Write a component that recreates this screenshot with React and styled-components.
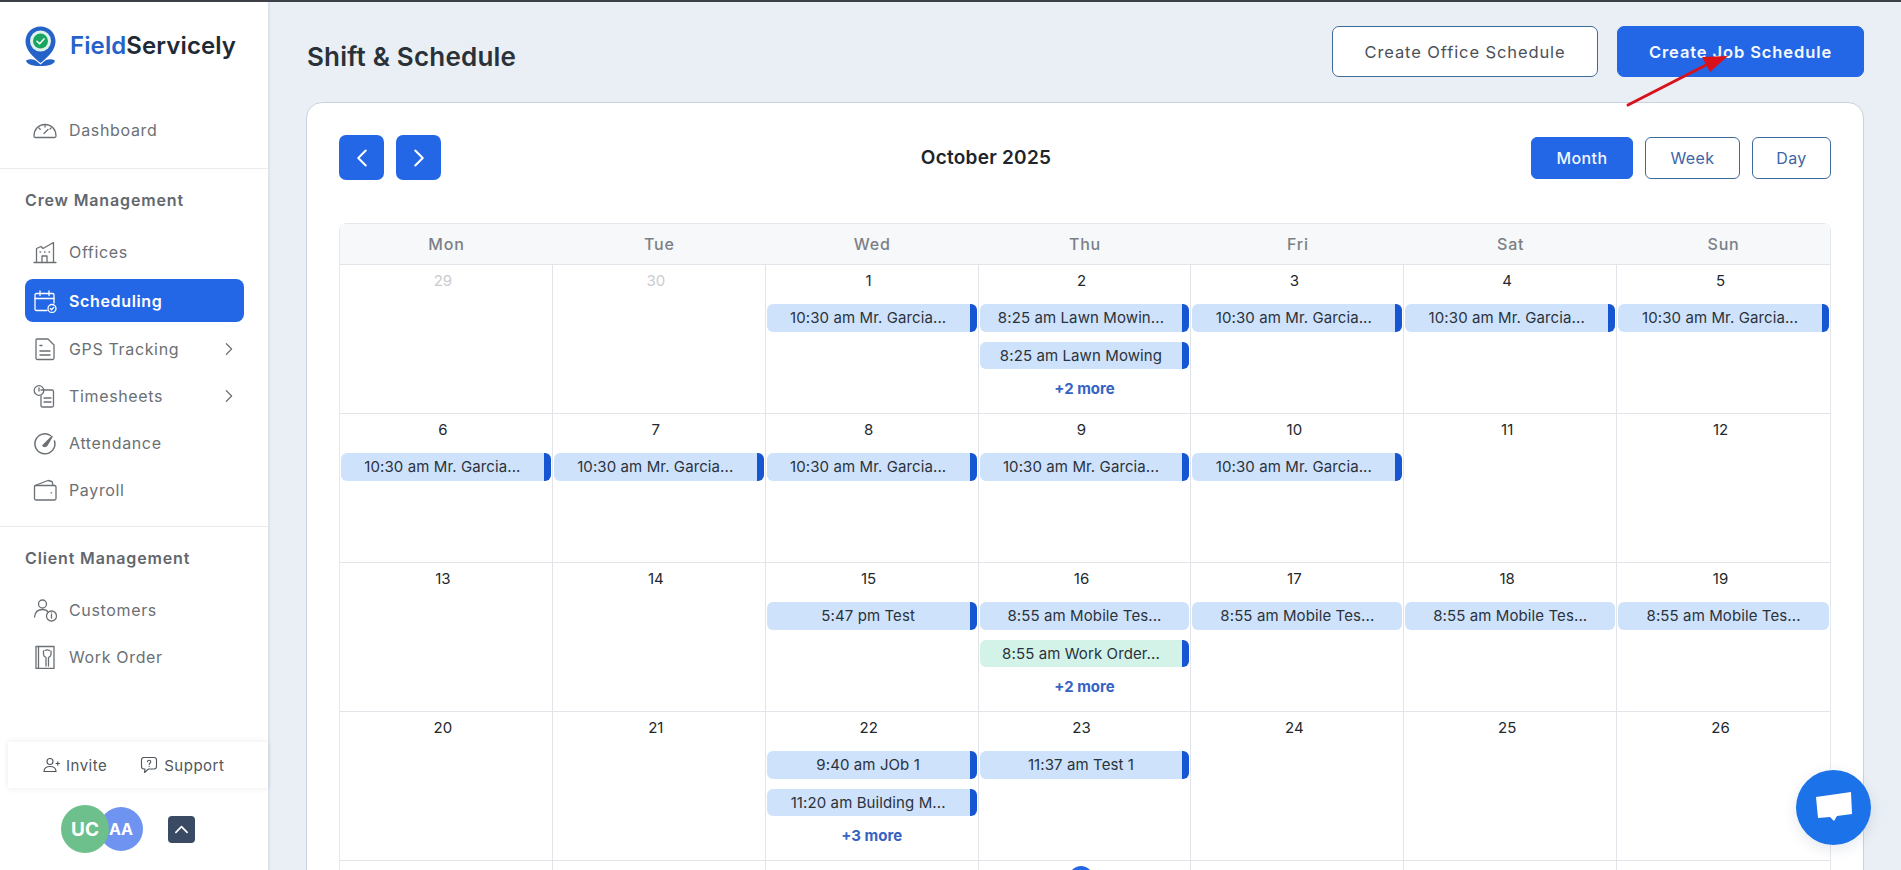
import React from 'react'
import styled, { createGlobalStyle } from 'styled-components'

const GlobalStyle = createGlobalStyle`
  * { box-sizing: border-box; }
  html, body { margin: 0; height: 870px; overflow: hidden; }
  body { font-family: Inter, "Open Sans", sans-serif; background: #e9eff5; }
`

const TopLine = styled.div`
  height: 2px;
  background: #3d4146;
`
const Layout = styled.div`
  display: flex;
  height: 868px;
`
const Sidebar = styled.aside`
  width: 270px;
  flex-shrink: 0;
  background: #fff;
  border-right: 2px solid #dde3eb;
  display: flex;
  flex-direction: column;
`
const Brand = styled.div`
  display: flex;
  gap: 14px;
  padding: 24px 0 0 25px;
  height: 106px;
  align-items: flex-start;
`
const BrandName = styled.div`
  font-size: 24px;
  font-weight: 600;
  color: #1f2a37;
  margin-top: 5px;
  letter-spacing: 0.1px;
  span { color: #2563c9; }
`
const NavRow = styled.div`
  height: 43px;
  margin: ${p => p.$active ? '6px 24px 1px 25px' : p.$first ? '0 24px 0 25px' : '4px 24px 0 25px'};
  padding: 0 8px;
  border-radius: 8px;
  display: flex;
  align-items: center;
  gap: 12px;
  font-size: 16px;
  letter-spacing: 0.65px;
  color: ${p => p.$active ? '#fff' : '#6b7075'};
  font-weight: ${p => p.$active ? 600 : 400};
  background: ${p => p.$active ? '#2367e6' : 'transparent'};
  svg.chev { margin-left: auto; }
`
const Divider = styled.div`
  height: 1px;
  background: #e9ecef;
  margin-top: ${p => p.$top || 0}px;
`
const SectionTitle = styled.div`
  font-size: 16px;
  font-weight: 600;
  letter-spacing: 0.85px;
  color: #62676d;
  padding-left: 25px;
  line-height: 20px;
  margin: 21px 0 20px;
`
const SideBottom = styled.div`
  margin-top: auto;
`
const InviteRow = styled.div`
  height: 46px;
  margin-left: 8px;
  display: flex;
  align-items: center;
  padding-left: 35px;
  gap: 33px;
  box-shadow: 0 -2px 6px rgba(30, 50, 80, 0.05), 0 2px 6px rgba(30, 50, 80, 0.05);
`
const InviteLink = styled.div`
  display: flex;
  align-items: center;
  gap: 6px;
  font-size: 15px;
  letter-spacing: 0.5px;
  color: #50565c;
`
const UserRow = styled.div`
  height: 82px;
  display: flex;
  align-items: center;
  padding: 0 0 0 61px;
`
const Avatar = styled.div`
  position: relative;
  z-index: ${p => p.$front ? 1 : 0};
  width: ${p => p.$size}px;
  height: ${p => p.$size}px;
  margin-left: ${p => p.$front ? 0 : -10}px;
  border-radius: 50%;
  background: ${p => p.$color};
  color: #fff;
  font-weight: 700;
  font-size: ${p => p.$front ? 19 : 16}px;
  display: flex;
  align-items: center;
  justify-content: center;
`
const UpButton = styled.div`
  width: 27px;
  height: 27px;
  margin-left: 25px;
  border-radius: 4px;
  background: #3a4a63;
  display: flex;
  align-items: center;
  justify-content: center;
`

const Main = styled.main`
  flex: 1;
  min-width: 0;
  height: 868px;
  overflow: hidden;
  padding: 24px 37px 0 36px;
`
const TopBar = styled.div`
  display: flex;
  align-items: center;
  gap: 19px;
  height: 51px;
  margin-bottom: 25px;
`
const PageTitle = styled.h1`
  margin: 9px auto 0 1px;
  font-size: 26px;
  font-weight: 600;
  color: #2b3138;
  letter-spacing: 0.2px;
`
const ActionButton = styled.div`
  height: 51px;
  width: ${p => p.$width}px;
  padding-top: 1px;
  border-radius: 7px;
  display: flex;
  align-items: center;
  justify-content: center;
  font-size: 16.5px;
  letter-spacing: 0.9px;
  font-weight: ${p => p.$primary ? 600 : 400};
  color: ${p => p.$primary ? '#f4f8ff' : '#4b5158'};
  background: ${p => p.$primary ? '#2367e6' : '#fff'};
  border: 1px solid ${p => p.$primary ? '#2367e6' : '#3f6b9b'};
`
const Card = styled.section`
  background: #fff;
  border: 1px solid #c9d2dd;
  border-radius: 16px;
  padding: 32px 32px 0;
`
const CalHeader = styled.div`
  display: flex;
  align-items: center;
  justify-content: space-between;
  height: 45px;
  margin-bottom: 43px;
`
const NavGroup = styled.div`
  display: flex;
  gap: ${p => p.$gap}px;
  align-items: center;
`
const ArrowButton = styled.div`
  width: 45px;
  height: 45px;
  border-radius: 7px;
  background: #2367e6;
  display: flex;
  align-items: center;
  justify-content: center;
`
const MonthTitle = styled.div`
  font-size: 19px;
  font-weight: 600;
  color: #20252b;
  letter-spacing: 0.25px;
`
const ViewButton = styled.div`
  height: 42px;
  width: ${p => p.$width}px;
  border-radius: 6px;
  display: flex;
  align-items: center;
  justify-content: center;
  font-size: 16px;
  letter-spacing: 0.4px;
  font-weight: ${p => p.$active ? 500 : 400};
  color: ${p => p.$active ? '#f1f6ff' : '#3e64a8'};
  background: ${p => p.$active ? '#2367e6' : '#fff'};
  border: 1px solid ${p => p.$active ? '#2367e6' : '#3f6b9b'};
`
const Grid = styled.div`
  display: grid;
  grid-template-columns: repeat(7, 1fr);
  border: 1px solid #e4e7eb;
  border-bottom: none;
  border-radius: 8px 8px 0 0;
`
const DayHead = styled.div`
  height: 41px;
  background: #f6f8f9;
  border-bottom: 1px solid #e1e4e8;
  display: flex;
  align-items: center;
  justify-content: center;
  font-size: 16px;
  font-weight: 500;
  letter-spacing: 0.8px;
  color: #7b8086;
`
const Cell = styled.div`
  height: 149px;
  padding: 5px 1px 0;
  border-right: 1px solid #e1e4e8;
  border-bottom: 1px solid #e1e4e8;
  &:nth-child(7n) { border-right: none; }
`
const DateNum = styled.div`
  height: 22px;
  line-height: 22px;
  margin-bottom: 12px;
  padding-right: 6px;
  text-align: center;
  font-size: 15px;
  color: ${p => p.$muted ? '#c9cccf' : '#23282d'};
`
const TodayMark = styled.span`
  display: inline-block;
  width: 24px;
  height: 24px;
  border-radius: 50%;
  background: #2367e6;
`
const Event = styled.div`
  height: 27.5px;
  margin-bottom: 10px;
  border-radius: 6px;
  overflow: hidden;
  display: flex;
  align-items: center;
  justify-content: center;
  white-space: nowrap;
  font-size: 15px;
  letter-spacing: 0.1px;
  color: #2a323c;
  background: ${p => p.$green ? '#d3f3e8' : '#cfe2fb'};
  border-right: ${p => p.$noBar ? 'none' : '7px solid #1656d2'};
`
const More = styled.div`
  margin-top: 1px;
  text-align: center;
  font-size: 15px;
  font-weight: 700;
  line-height: 20px;
  color: #3563c4;
`
const ChatBubble = styled.div`
  position: fixed;
  left: 1796px;
  top: 770px;
  width: 75px;
  height: 75px;
  border-radius: 50%;
  background: #1c72e8;
  box-shadow: 0 4px 14px rgba(30, 60, 110, 0.12);
  display: flex;
  align-items: center;
  justify-content: center;
`
const Annotation = styled.svg`
  position: fixed;
  left: 1620px;
  top: 48px;
  pointer-events: none;
`

const stroke = { fill: 'none', stroke: 'currentColor', strokeWidth: 1.3, strokeLinecap: 'round', strokeLinejoin: 'round' }

function Logo() {
  return (
    <svg width="31" height="41" viewBox="0 0 31 41">
      <path d="M1 34.5C5 32.5 9 33 12 35.5L15.5 38.5 19 35.5C22 33 26 32.5 30 34.5 29 38.5 24 40 15.5 40 7 40 2 38.5 1 34.5Z" fill="#2563c9" />
      <path d="M15.5 0.5C7 0.5 0.5 7 0.5 15.5 0.5 24 8 31 15.5 37 23 31 30.5 24 30.5 15.5 30.5 7 24 0.5 15.5 0.5Z" fill="#2563c9" />
      <circle cx="15.5" cy="15" r="10.5" fill="#dff3ea" />
      <circle cx="15.5" cy="15" r="7.5" fill="#19a561" />
      <path d="M12 15.2l2.6 2.5 4.4-4.8" fill="none" stroke="#fff" strokeWidth="1.5" strokeLinecap="round" strokeLinejoin="round" />
    </svg>
  )
}

const icons = {
  dashboard: (
    <g {...stroke}>
      <path d="M2.5 19.5C1.5 19.5 1 19 1 18 1 11.5 5.5 6.5 12 6.5S23 11.5 23 18C23 19 22.5 19.5 21.5 19.5Z" />
      <path d="M11 15.5l4-4M6 10l1.2 1.2M12 7.500v1.500M18 10l-1 1" />
    </g>
  ),
  offices: (
    <g {...stroke}>
      <path d="M1 22.500H23M3.500 22.500V8.500L8 6.500 10 8.500 20.500 2.500V22.500" />
      <path d="M9 22.500V16H14V22.500M7 12h.6M11.500 12h.6M16 12h.6" />
    </g>
  ),
  scheduling: (
    <g {...stroke}>
      <path d="M14 21.500H3.500C2.500 21.500 2 21 2 20V6C2 5 2.500 4.500 3.500 4.500H19.500C20.500 4.500 21 5 21 6V14" />
      <path d="M2 9.500H21M7 2V6.500M16 2V6.500" />
      <circle cx="19" cy="19.500" r="4" />
      <path d="M17.300 19.600l1.300 1.200 2.200-2.400" />
    </g>
  ),
  gps: (
    <g {...stroke}>
      <path d="M4 2H15L21 8V21C21 22 20.500 22.500 19.500 22.500H4.500C3.500 22.500 3 22 3 21V3C3 2.500 3.500 2 4 2Z" />
      <path d="M7 8.500H9M7 14H17M7 18H17" strokeWidth="1.4" />
    </g>
  ),
  timesheets: (
    <g {...stroke}>
      <path d="M8 6H19C20 6 20.500 6.500 20.500 7.500V21.500C20.500 22.500 20 23 19 23H9.500C8.500 23 8 22.500 8 21.500V12" />
      <circle cx="6" cy="6.500" r="4.800" />
      <path d="M6 4V7M11 14H18M11 18H18" />
    </g>
  ),
  attendance: (
    <g {...stroke} strokeWidth="1.5">
      <path d="M17.500 4.500A10 10 0 1 0 21.500 10" />
      <path d="M10 14.500L19 5.500 14 14C13 15.500 10.500 16 10 14.500Z" fill="currentColor" />
    </g>
  ),
  payroll: (
    <g {...stroke}>
      <path d="M1.500 8.500V20.500C1.500 21.500 2 22 3 22H21.500C22.500 22 23 21.500 23 20.500V9C23 8 22.500 7.500 21.500 7.500H3C2 7.500 1.500 8 1.500 8.500Z" />
      <path d="M2 7.500L15 2.500 19 3.500 20 7M18 14.800h.6" />
    </g>
  ),
  customers: (
    <g {...stroke}>
      <circle cx="9.500" cy="6" r="4" />
      <path d="M1.500 19C2 14 5 11.500 9.500 11.500 12 11.500 14 12.500 15 14" />
      <circle cx="18.500" cy="18" r="5" />
      <path d="M18.500 16.500V20M18.500 14.800v.1" />
    </g>
  ),
  workorder: (
    <g {...stroke}>
      <path d="M3 1.500H21V23.500H3ZM5.500 1.500V23.500" />
      <path d="M10.500 6V9.500C10.500 11 12 12 13 12.500V21M18 6V9.500C18 11 16.500 12 15.500 12.500V21M12 5.500A5 5 0 0 1 16.500 5.500" />
    </g>
  ),
}

function NavIcon({ name }) {
  return <svg width="24" height="24" viewBox="0 0 24 24">{icons[name]}</svg>
}

function Chevron({ dir = 'right', color = '#6b7075', size = 14, width = 1.4 }) {
  const d = dir === 'right' ? 'M5 2l6 6-6 6' : dir === 'left' ? 'M11 2L5 8l6 6' : 'M2 11l6-6 6 6'
  return (
    <svg className="chev" width={size} height={size} viewBox="0 0 16 16">
      <path d={d} fill="none" stroke={color} strokeWidth={width} strokeLinecap="round" strokeLinejoin="round" />
    </svg>
  )
}

const g = t => ({ t })
const garcia = g('10:30 am Mr. Garcia...')
const mobile = { t: '8:55 am Mobile Tes...', noBar: true }

const weeks = [
  [
    { d: 29, muted: true }, { d: 30, muted: true },
    { d: 1, ev: [garcia] },
    { d: 2, ev: [g('8:25 am Lawn Mowin...'), g('8:25 am Lawn Mowing')], more: 2 },
    { d: 3, ev: [garcia] }, { d: 4, ev: [garcia] }, { d: 5, ev: [garcia] },
  ],
  [
    { d: 6, ev: [garcia] }, { d: 7, ev: [garcia] }, { d: 8, ev: [garcia] },
    { d: 9, ev: [garcia] }, { d: 10, ev: [garcia] }, { d: 11 }, { d: 12 },
  ],
  [
    { d: 13 }, { d: 14 },
    { d: 15, ev: [g('5:47 pm Test')] },
    { d: 16, ev: [mobile, { t: '8:55 am Work Order...', green: true }], more: 2 },
    { d: 17, ev: [mobile] }, { d: 18, ev: [mobile] }, { d: 19, ev: [mobile] },
  ],
  [
    { d: 20 }, { d: 21 },
    { d: 22, ev: [g('9:40 am JOb 1'), g('11:20 am Building M...')], more: 3 },
    { d: 23, ev: [g('11:37 am Test 1')] },
    { d: 24 }, { d: 25 }, { d: 26 },
  ],
  // only the top of the next week shows above the fold: the today marker
  [{}, {}, {}, { today: true }, {}, {}, {}],
]

const days = ['Mon', 'Tue', 'Wed', 'Thu', 'Fri', 'Sat', 'Sun']

export default function App() {
  return (
    <>
      <GlobalStyle />
      <TopLine />
      <Layout>
        <Sidebar>
          <Brand>
            <Logo />
            <BrandName><span>Field</span>Servicely</BrandName>
          </Brand>
          <NavRow $first><NavIcon name="dashboard" />Dashboard</NavRow>
          <Divider $top={17} />
          <SectionTitle>Crew Management</SectionTitle>
          <NavRow $first><NavIcon name="offices" />Offices</NavRow>
          <NavRow $active><NavIcon name="scheduling" />Scheduling</NavRow>
          <NavRow><NavIcon name="gps" />GPS Tracking<Chevron /></NavRow>
          <NavRow><NavIcon name="timesheets" />Timesheets<Chevron /></NavRow>
          <NavRow><NavIcon name="attendance" />Attendance</NavRow>
          <NavRow><NavIcon name="payroll" />Payroll</NavRow>
          <Divider $top={15} />
          <SectionTitle>Client Management</SectionTitle>
          <NavRow $first><NavIcon name="customers" />Customers</NavRow>
          <NavRow><NavIcon name="workorder" />Work Order</NavRow>
          <SideBottom>
            <InviteRow>
              <InviteLink>
                <svg width="17" height="16" viewBox="0 0 17 16">
                  <g fill="none" stroke="#50565c" strokeWidth="1.1" strokeLinecap="round">
                    <circle cx="7" cy="4.500" r="3" />
                    <path d="M1 14.500C1 11 3.500 9.500 7 9.500S13 11 13 14.500ZM13 6.500h3.500M14.750 4.750v3.500" />
                  </g>
                </svg>
                Invite
              </InviteLink>
              <InviteLink>
                <svg width="18" height="18" viewBox="0 0 18 18">
                  <path d="M4 1.500H14C15.500 1.500 16.500 2.500 16.500 4V10.500C16.500 12 15.500 13 14 13H8.500L4.500 16.500 5 13H4C2.500 13 1.500 12 1.500 10.500V4C1.500 2.500 2.500 1.500 4 1.500Z" fill="none" stroke="#50565c" strokeWidth="1.1" strokeLinejoin="round" />
                  <path d="M7.500 5.800C7.500 3.800 10.800 3.800 10.800 5.800 10.800 7 9.200 7 9.200 8.500M9.200 10.300v.1" fill="none" stroke="#50565c" strokeWidth="1.1" strokeLinecap="round" />
                </svg>
                Support
              </InviteLink>
            </InviteRow>
            <UserRow>
              <Avatar $front $size={48} $color="#6dbf8b">UC</Avatar>
              <Avatar $size={44} $color="#6f93f0">AA</Avatar>
              <UpButton><Chevron dir="up" color="#fff" size={15} width={1.8} /></UpButton>
            </UserRow>
          </SideBottom>
        </Sidebar>

        <Main>
          <TopBar>
            <PageTitle>Shift &amp; Schedule</PageTitle>
            <ActionButton $width={266}>Create Office Schedule</ActionButton>
            <ActionButton $primary $width={247}>Create Job Schedule</ActionButton>
          </TopBar>
          <Card>
            <CalHeader>
              <NavGroup $gap={12}>
                <ArrowButton><Chevron dir="left" color="#fff" size={20} width={1.6} /></ArrowButton>
                <ArrowButton><Chevron color="#fff" size={20} width={1.6} /></ArrowButton>
              </NavGroup>
              <MonthTitle>October 2025</MonthTitle>
              <NavGroup $gap={12}>
                <ViewButton $active $width={102}>Month</ViewButton>
                <ViewButton $width={95}>Week</ViewButton>
                <ViewButton $width={79}>Day</ViewButton>
              </NavGroup>
            </CalHeader>
            <Grid>
              {days.map(day => <DayHead key={day}>{day}</DayHead>)}
              {weeks.flat().map((c, i) => (
                <Cell key={i}>
                  <DateNum $muted={c.muted}>
                    {c.today ? <TodayMark /> : c.d}
                  </DateNum>
                  {(c.ev || []).map((e, j) => (
                    <Event key={j} $green={e.green} $noBar={e.noBar}>{e.t}</Event>
                  ))}
                  {c.more && <More>+{c.more} more</More>}
                </Cell>
              ))}
            </Grid>
          </Card>
        </Main>
      </Layout>

      <Annotation width="120" height="66" viewBox="0 0 120 66">
        <path d="M8 57L88 16" stroke="#d8111b" strokeWidth="3" strokeLinecap="round" />
        <path d="M108 8L82 9 90 24Z" fill="#d8111b" />
      </Annotation>

      <ChatBubble>
        <svg width="38" height="34" viewBox="0 0 38 34">
          <path d="M1 6L36 1 37 23 22 25 19 30 15 26 3 27Z" fill="#fff" />
        </svg>
      </ChatBubble>
    </>
  )
}
